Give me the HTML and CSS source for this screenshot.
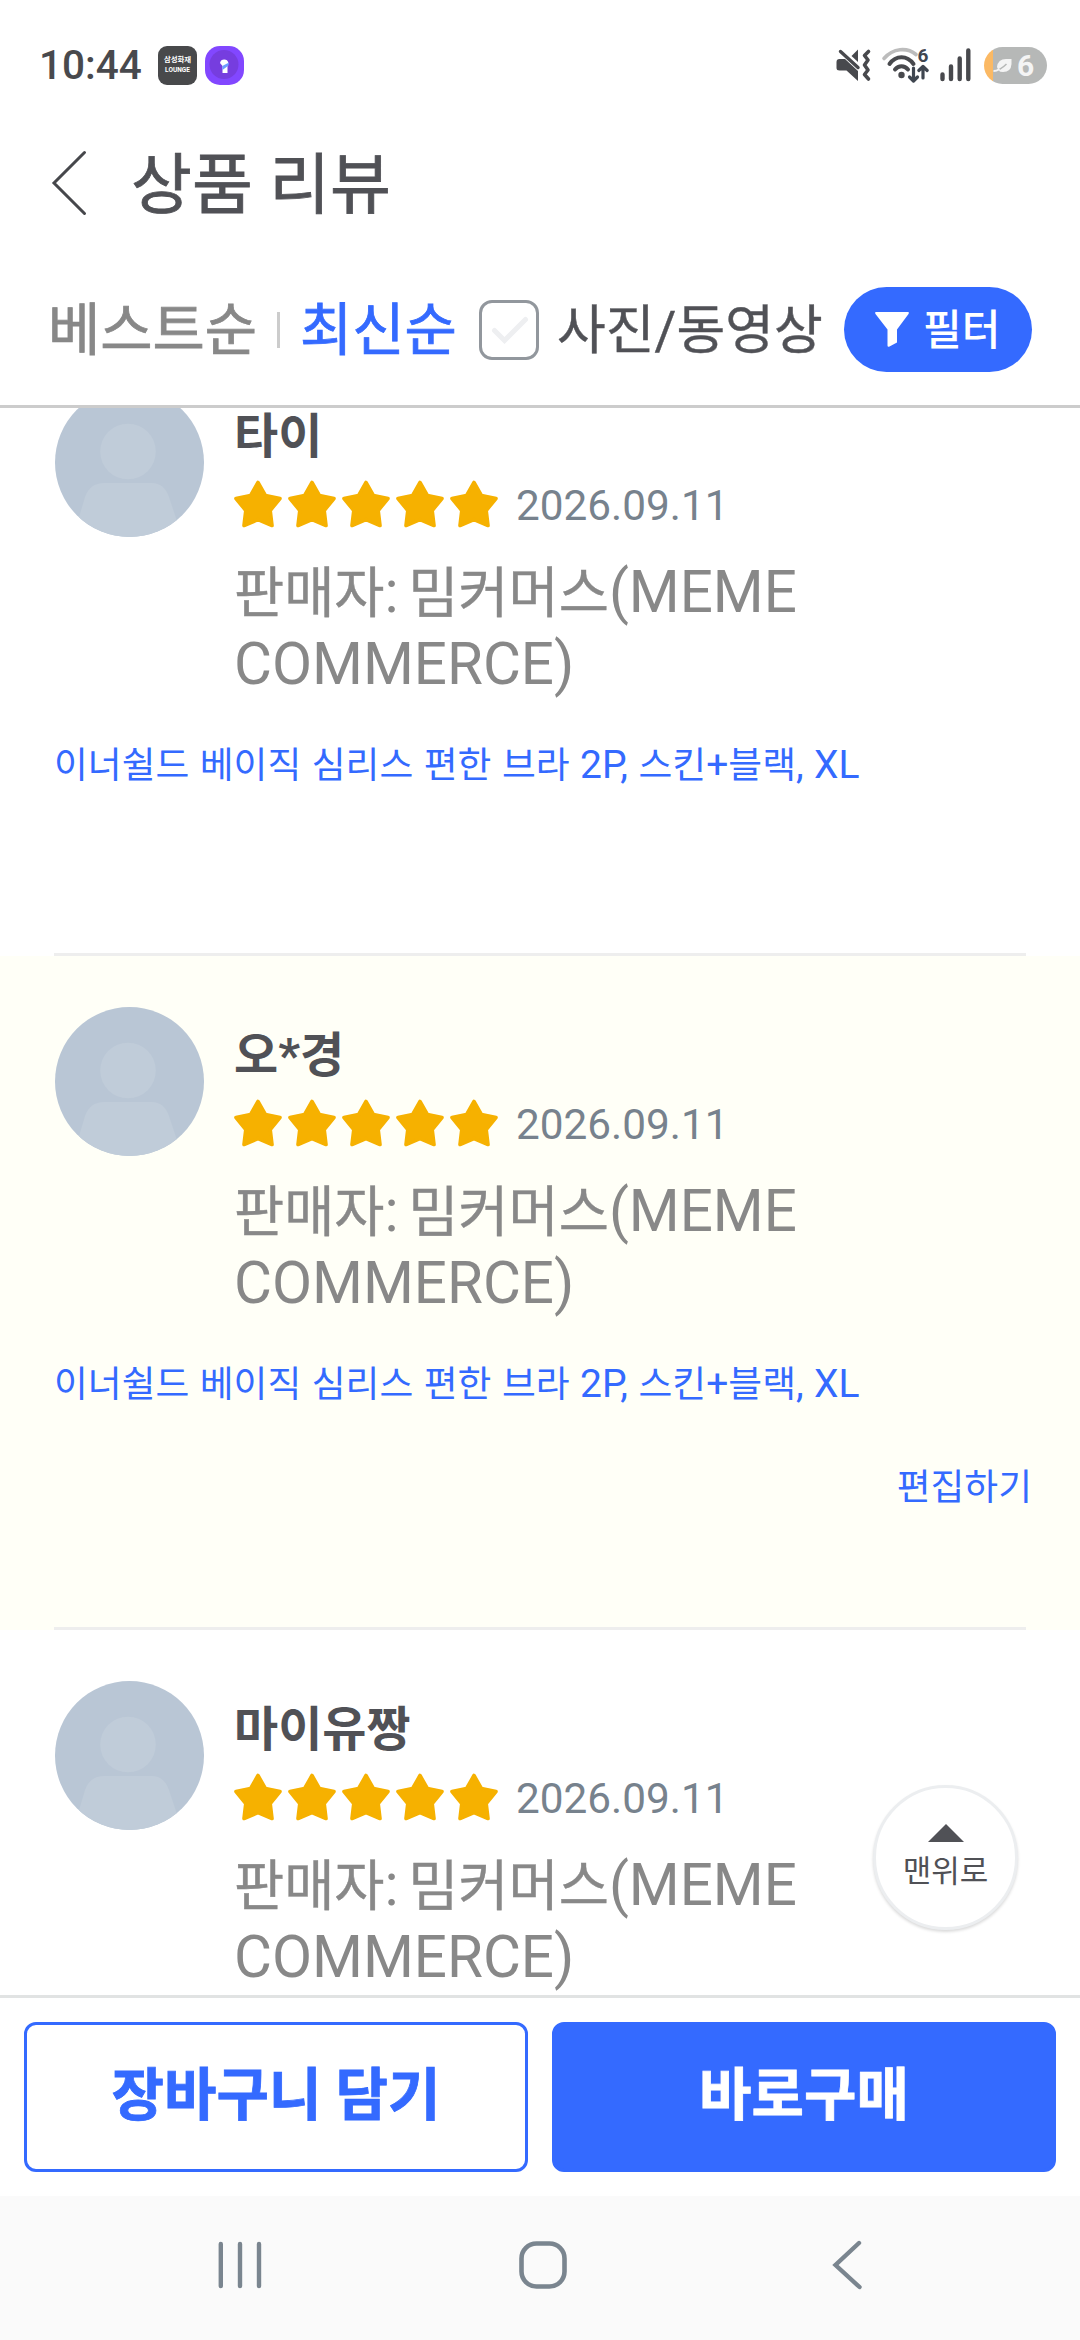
FILE: index.html
```html
<!DOCTYPE html>
<html lang="ko">
<head>
<meta charset="utf-8">
<title>상품 리뷰</title>
<link rel="stylesheet" href="styles.css">
</head>
<body>
<svg class="defs" width="0" height="0" aria-hidden="true">
  <symbol id="star" viewBox="0 0 48 48">
    <path d="M24 2.500 L31.500 15.600 L46 18.500 L36.200 30.500 L38 45.500 L24 39.600 L10 45.500 L11.800 30.500 L2 18.500 L16.500 15.600 Z" fill="#f6b100" stroke="#f6b100" stroke-width="3.600" stroke-linejoin="round"/>
  </symbol>
  <symbol id="avatar" viewBox="0 0 149 149">
    <clipPath id="disc"><circle cx="74.500" cy="74.500" r="74.500"/></clipPath>
    <g clip-path="url(#disc)">
      <rect width="149" height="149" fill="#b9c6d5"/>
      <circle cx="73" cy="63.500" r="27.800" fill="#c0ccd9"/>
      <path d="M22 136 L30 109 Q35 95 49 95 H97 Q109 95 114 109 L123 136 V149 H22 Z" fill="#c0ccd9"/>
    </g>
  </symbol>
</svg>

<div class="screen">
  <header class="status">
    <span class="clock">10:44</span>
    <span class="app-lounge"><span class="lounge-ko">삼성화재</span><span class="lounge-en">LOUNGE</span></span>
    <svg class="app-purple" width="39" height="39" viewBox="0 0 39 39">
      <rect width="39" height="39" rx="15" fill="#8247ff"/>
      <circle cx="19" cy="18.500" r="14.500" fill="#763ddf"/>
      <path d="M15 17 a4.300 4.300 0 0 1 8.400 0 L22.500 20 V27 H17.500 V20 Z" fill="#fff"/>
      <path d="M17.300 20 L24 16.500 L23.500 19.500 L17.500 24 Z" fill="#6d9cff"/>
    </svg>
    <div class="status-right">
      <svg width="36" height="34" viewBox="0 0 36 34">
        <path d="M0.500 14 Q0.500 11 3.500 11 H9 L22 23 V33 L10.500 22.500 H3.500 Q0.500 22.500 0.500 20 Z" fill="#48494d"/>
        <path d="M22 1.500 V14 L15.500 8 Z" fill="#48494d"/>
        <path d="M4.500 3.500 L22 19.500" stroke="#48494d" stroke-width="3.400" stroke-linecap="round"/>
        <path d="M32.500 3.500 L28.500 7.500 L32 12 L28.500 17 L32 22 L28.500 26.500 L32.500 31" fill="none" stroke="#48494d" stroke-width="3.600" stroke-linecap="round" stroke-linejoin="round"/>
      </svg>
      <svg class="wifi" width="47" height="36" viewBox="0 0 47 36">
        <path d="M2 11.500 C11 1 25 0 34 7.500" fill="none" stroke="#bcbcbc" stroke-width="3.600" stroke-linecap="round"/>
        <path d="M7.500 17 C14 8 25 8 31.500 17 M13 22.500 C16.500 18 22.500 18 26 22.500" fill="none" stroke="#48494d" stroke-width="4" stroke-linecap="round"/>
        <circle cx="19.500" cy="28" r="3.200" fill="#48494d"/>
        <path d="M31.500 21 V33.500 M27.500 30 L31.500 34 L35.500 30 M41 31 V20 M36.800 23.500 L41 19.500 L45.200 23.500" fill="none" stroke="#3f4650" stroke-width="3.200" stroke-linecap="round" stroke-linejoin="round"/>
        <text x="35.500" y="15" class="wifi-num">6</text>
      </svg>
      <svg class="signal" width="32" height="34" viewBox="0 0 32 34">
        <path d="M2.500 26.500 V31 M11 18.500 V31 M19.700 10.500 V31 M28.300 2.500 V31" stroke="#48494d" stroke-width="4.400" stroke-linecap="round"/>
      </svg>
      <div class="battery">
        <svg width="20" height="17" viewBox="0 0 20 17">
          <path d="M4 10 Q5 2 13 2 L18.500 2 V7 Q18 15 10 15 Q7 15 5.500 13.500 Z" fill="#f4f4f4"/>
          <path d="M1 14 Q7 13.500 13.500 7" fill="none" stroke="#b6b8b7" stroke-width="1.500"/>
          <path d="M0.500 14 Q3.500 14 6.500 12" fill="none" stroke="#f4f4f4" stroke-width="2"/>
        </svg>
        <span>6</span>
      </div>
    </div>
  </header>

  <div class="titlebar">
    <svg width="38" height="68" viewBox="0 0 38 68">
      <path d="M34.500 3.500 L4 34 L34.500 64.500" fill="none" stroke="#46474b" stroke-width="3" stroke-linecap="round"/>
    </svg>
    <h1>상품 리뷰</h1>
  </div>

  <nav class="filters">
    <span class="sort">베스트순</span>
    <i class="bar"></i>
    <span class="sort active">최신순</span>
    <span class="check">
      <svg width="54" height="54" viewBox="0 0 54 54"><path d="M12.500 27.500 L22.500 37.500 L43.500 16.500" fill="none" stroke="#eeeff1" stroke-width="5" stroke-linecap="round" stroke-linejoin="miter"/></svg>
    </span>
    <span class="media">사진/동영상</span>
    <span class="pill">
      <svg width="34" height="35" viewBox="0 0 34 35"><path d="M1 0 H33 Q34.500 0 33.500 2 L22 17.500 V30.500 L14 34.700 Q12.500 35 12.500 33.500 V17.500 L0.500 2 Q-0.500 0 1 0 Z" fill="#fff"/></svg>
      <span>필터</span>
    </span>
  </nav>

  <main class="list">
    <article class="review">
      <div class="author">
        <svg class="avatar"><use href="#avatar"/></svg>
        <div class="meta">
          <strong class="name">타이</strong>
          <div class="rating"><svg><use href="#star"/></svg><svg><use href="#star"/></svg><svg><use href="#star"/></svg><svg><use href="#star"/></svg><svg><use href="#star"/></svg><span class="date">2026.09.11</span></div>
          <p class="seller"><span class="ko">판매자</span>: <span class="ko">밈커머스</span>(MEME<br>COMMERCE)</p>
        </div>
      </div>
      <p class="option"><span class="ko">이너쉴드</span> <span class="ko">베이직</span> <span class="ko">심리스</span> <span class="ko">편한</span> <span class="ko">브라</span> 2P, <span class="ko">스킨</span>+<span class="ko">블랙</span>, XL</p>
    </article>

    <article class="review mine">
      <div class="author">
        <svg class="avatar"><use href="#avatar"/></svg>
        <div class="meta">
          <strong class="name">오*경</strong>
          <div class="rating"><svg><use href="#star"/></svg><svg><use href="#star"/></svg><svg><use href="#star"/></svg><svg><use href="#star"/></svg><svg><use href="#star"/></svg><span class="date">2026.09.11</span></div>
          <p class="seller"><span class="ko">판매자</span>: <span class="ko">밈커머스</span>(MEME<br>COMMERCE)</p>
        </div>
      </div>
      <p class="option"><span class="ko">이너쉴드</span> <span class="ko">베이직</span> <span class="ko">심리스</span> <span class="ko">편한</span> <span class="ko">브라</span> 2P, <span class="ko">스킨</span>+<span class="ko">블랙</span>, XL</p>
      <a class="edit"><span class="ko">편집하기</span></a>
    </article>

    <article class="review">
      <div class="author">
        <svg class="avatar"><use href="#avatar"/></svg>
        <div class="meta">
          <strong class="name">마이유짱</strong>
          <div class="rating"><svg><use href="#star"/></svg><svg><use href="#star"/></svg><svg><use href="#star"/></svg><svg><use href="#star"/></svg><svg><use href="#star"/></svg><span class="date">2026.09.11</span></div>
          <p class="seller"><span class="ko">판매자</span>: <span class="ko">밈커머스</span>(MEME<br>COMMERCE)</p>
        </div>
      </div>
    </article>

    <div class="to-top">
      <svg width="36" height="18" viewBox="0 0 36 18"><path d="M18 0 L36 18 H0 Z" fill="#505156"/></svg>
      <span>맨위로</span>
    </div>
  </main>

  <footer class="buy">
    <span class="btn cart">장바구니 담기</span>
    <span class="btn now">바로구매</span>
  </footer>

  <div class="navbar">
    <svg width="44" height="48" viewBox="0 0 44 48"><path d="M2.800 3 V45 M22 3 V45 M41 3 V45" stroke="#7a858f" stroke-width="4.400" stroke-linecap="round"/></svg>
    <svg class="home" width="48" height="48" viewBox="0 0 48 48"><rect x="2.500" y="2.500" width="43" height="43" rx="15" fill="none" stroke="#7a858f" stroke-width="4.600"/></svg>
    <svg width="30" height="50" viewBox="0 0 30 50"><path d="M27 3 L3.500 25 L27.500 47" fill="none" stroke="#7a858f" stroke-width="4.400" stroke-linecap="round"/></svg>
  </div>
</div>
</body>
</html>
```
FILE: styles.css
```css
* { box-sizing: border-box; }
body, h1, p { margin: 0; }
body {
  background: #fff;
  color: #505156;
  font-family: Roboto, "Noto Sans CJK KR", sans-serif;
  white-space: nowrap;
}
svg { display: block; flex: none; }
.defs { position: absolute; }
.ko { font-size: 0.943em; line-height: 1; }
.screen {
  width: 1080px;
  height: 2340px;
  display: flex;
  flex-direction: column;
  overflow: hidden;
}

.status {
  height: 130px;
  padding: 0 33px 0 39px;
  display: flex;
  align-items: center;
  flex: none;
}
.clock {
  width: 119px;
  font-size: 40.5px;
  font-weight: 500;
  color: #48494d;
}
.app-lounge {
  width: 39px;
  height: 39px;
  margin-right: 8px;
  border-radius: 9px;
  background: #48494b;
  color: #fff;
  display: flex;
  flex-direction: column;
  align-items: center;
  justify-content: center;
  gap: 3px;
  font-weight: 700;
}
.lounge-ko { font-size: 7.4px; line-height: 8px; }
.lounge-en { font-size: 6.5px; line-height: 7px; }
.status-right {
  margin-left: auto;
  display: flex;
  align-items: center;
}
.wifi { margin-left: 10px; overflow: visible; }
.wifi-num { font: 700 19px Roboto, sans-serif; fill: #3f4650; }
.signal { margin-left: 11px; }
.battery {
  width: 63px;
  height: 37px;
  margin-left: 12px;
  padding-left: 9px;
  border-radius: 19px;
  background: linear-gradient(90deg, #fbb964 9px, #b6b8b7 9px);
  display: flex;
  align-items: center;
  gap: 4px;
  font-size: 30px;
  font-weight: 700;
  color: #f4f4f4;
}

.titlebar {
  height: 106px;
  padding-left: 50px;
  display: flex;
  align-items: center;
  flex: none;
}
.titlebar h1 {
  margin-left: 43px;
  padding-top: 6px;
  font-size: 66.2px;
  font-weight: 400;
  line-height: 96px;
  -webkit-text-stroke: 0.8px currentColor;
}

.filters {
  height: 172px;
  padding: 18px 48px 0 48px;
  border-bottom: 3px solid #ccc;
  display: flex;
  align-items: center;
  flex: none;
  line-height: 80px;
}
.sort {
  width: 229px;
  padding-top: 3px;
  font-size: 56.8px;
  color: #888;
  -webkit-text-stroke: 0.8px currentColor;
}
.sort.active { width: 179px; color: #346aff; }
.bar { width: 3px; height: 36px; margin-right: 20px; background: #ccc; }
.check {
  width: 60px;
  height: 60px;
  border: 3px solid #92979d;
  border-radius: 13px;
}
.media {
  margin-left: 18px;
  padding-top: 2px;
  font-size: 53px;
  -webkit-text-stroke: 0.4px currentColor;
}
.pill {
  width: 188px;
  height: 85px;
  margin-left: auto;
  padding-left: 31px;
  border-radius: 43px;
  background: #346aff;
  color: #fff;
  display: flex;
  align-items: center;
  gap: 14px;
  font-size: 42px;
  font-weight: 500;
}
.pill span { padding-top: 2px; }

.list {
  height: 1587px;
  flex: none;
  overflow: hidden;
  position: relative;
}
.review {
  height: 674px;
  padding: 51px 48px 0 55px;
  position: relative;
}
.review:first-child { height: 619px; margin-top: -71px; }
.review::after {
  content: "";
  position: absolute;
  left: 54px;
  right: 54px;
  bottom: 0;
  height: 3px;
  background: #eee;
}
.mine { background: #fffff7; }
.author { display: flex; gap: 30px; }
.avatar { width: 149px; height: 149px; }
.name { display: block; margin-top: 22px; font-size: 48px; line-height: 54px; font-weight: 700; }
.rating { display: flex; align-items: center; gap: 6px; height: 48px; margin-top: 16px; }
.rating svg { width: 48px; height: 48px; }
.date { margin-left: 12px; padding-top: 4px; font-size: 42.3px; line-height: 48px; color: #77828d; }
.seller { margin-top: 28px; font-size: 58.3px; line-height: 72px; color: #888; word-spacing: -5px; }
.seller .ko {
  font-size: 0.936em;
  -webkit-text-stroke: 0.4px currentColor;
}
.option { margin: 36px 0 0 -1px; font-size: 39px; line-height: 58px; color: #346aff; word-spacing: 0.8px; }
.edit { display: block; margin-top: 45px; text-align: right; font-size: 39px; line-height: 58px; color: #346aff; }

.to-top {
  position: absolute;
  left: 873px;
  top: 1377px;
  width: 145px;
  height: 145px;
  padding-top: 36px;
  border: 3px solid #eceef0;
  border-radius: 50%;
  background: #fff;
  box-shadow: 0 2px 3px rgba(0, 0, 0, 0.15);
  display: flex;
  flex-direction: column;
  align-items: center;
  font-size: 31px;
  line-height: 40px;
}
.to-top span { margin-top: 10px; }

.buy {
  height: 201px;
  padding: 24px 24px 0;
  border-top: 3px solid #e1e3e3;
  display: flex;
  gap: 24px;
  flex: none;
}
.btn {
  width: 504px;
  height: 150px;
  border: 3px solid #346aff;
  border-radius: 12px;
  text-align: center;
  font-size: 57px;
  line-height: 142px;
  font-weight: 700;
  -webkit-text-stroke: 0.8px currentColor;
}
.cart { color: #346aff; }
.now { background: #346aff; color: #fff; }

.navbar {
  height: 144px;
  padding: 0 218px 7px;
  background: #fafafa;
  display: flex;
  align-items: center;
  justify-content: space-between;
  flex: none;
}
.home { margin-right: 8px; }
```
